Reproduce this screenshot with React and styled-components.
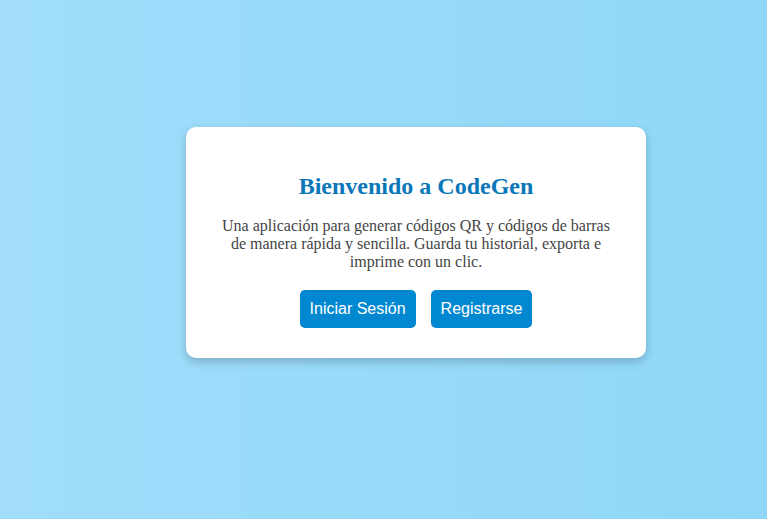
import React from 'react';
import styled, { createGlobalStyle } from 'styled-components';

const GlobalStyle = createGlobalStyle`
  html, body {
    margin: 0;
    padding: 0;
  }
  body {
    font-family: "Liberation Serif", "Times New Roman", serif;
    background: linear-gradient(to right, #a1ddfb, #8fd7f8);
    min-height: 100vh;
  }
`;

const Page = styled.div`
  min-height: 100vh;
  box-sizing: border-box;
  display: flex;
  align-items: center;
  justify-content: center;
  padding: 0 0 35px 65px;
`;

const Card = styled.div`
  width: 460px;
  box-sizing: border-box;
  background: white;
  border-radius: 10px;
  padding: 46px 32px 30px;
  text-align: center;
  box-shadow: 0 4px 10px rgba(0, 0, 0, 0.2);
`;

const Title = styled.h2`
  margin: 0 0 17px;
  font-size: 24px;
  font-weight: bold;
  color: #0a77b9;
`;

const Description = styled.p`
  margin: 0 0 19px;
  font-size: 16px;
  line-height: 18px;
  color: #444;
`;

const Actions = styled.div`
  display: flex;
  justify-content: center;
  gap: 15px;
`;

const Button = styled.button`
  border: none;
  border-radius: 5px;
  padding: 10px;
  background: #0288d1;
  color: white;
  font-family: "Liberation Sans", Arial, sans-serif;
  font-size: 16px;
  line-height: 18px;
  cursor: pointer;
`;

export default function App() {
  return (
    <>
      <GlobalStyle />
      <Page>
        <Card>
          <Title>Bienvenido a CodeGen</Title>
          <Description>
            Una aplicación para generar códigos QR y códigos de barras de manera
            rápida y sencilla. Guarda tu historial, exporta e imprime con un clic.
          </Description>
          <Actions>
            <Button>Iniciar Sesión</Button>
            <Button>Registrarse</Button>
          </Actions>
        </Card>
      </Page>
    </>
  );
}
